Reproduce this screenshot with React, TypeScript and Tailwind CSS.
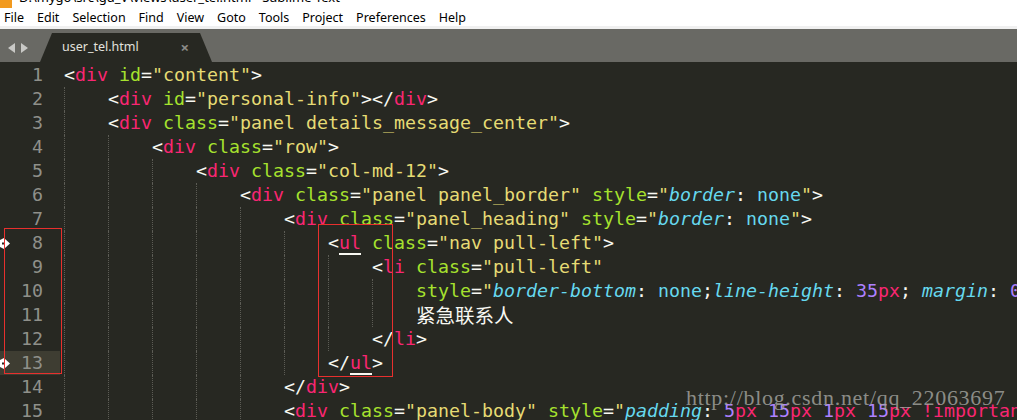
import React from "react";

type Tok = [string, string, boolean?];

const W = "text-[#f8f8f2]";
const P = "text-[#f92672]";
const G = "text-[#a6e22e]";
const Y = "text-[#e6db74]";
const B = "text-[#66d9ef]";
const BI = "text-[#66d9ef] italic";
const N = "text-[#ae81ff]";
const CJK = "text-[#f8f8f2] text-[19.5px] [font-family:'Noto_Sans_CJK_SC',sans-serif]";

const lines: { indent: number; toks: Tok[] }[] = [
  { indent: 0, toks: [["<", W], ["div", P], [" id", G], ["=", W], ['"content"', Y], [">", W]] },
  {
    indent: 1,
    toks: [["<", W], ["div", P], [" id", G], ["=", W], ['"personal-info"', Y], [">", W], ["</", W], ["div", P], [">", W]],
  },
  {
    indent: 1,
    toks: [["<", W], ["div", P], [" class", G], ["=", W], ['"panel details_message_center"', Y], [">", W]],
  },
  { indent: 2, toks: [["<", W], ["div", P], [" class", G], ["=", W], ['"row"', Y], [">", W]] },
  { indent: 3, toks: [["<", W], ["div", P], [" class", G], ["=", W], ['"col-md-12"', Y], [">", W]] },
  {
    indent: 4,
    toks: [
      ["<", W], ["div", P], [" class", G], ["=", W], ['"panel panel_border"', Y], [" style", G], ["=", W],
      ['"', Y], ["border", BI], [":", W], [" none", B], ['"', Y], [">", W],
    ],
  },
  {
    indent: 5,
    toks: [
      ["<", W], ["div", P], [" class", G], ["=", W], ['"panel_heading"', Y], [" style", G], ["=", W],
      ['"', Y], ["border", BI], [":", W], [" none", B], ['"', Y], [">", W],
    ],
  },
  { indent: 6, toks: [["<", W], ["ul", P, true], [" class", G], ["=", W], ['"nav pull-left"', Y], [">", W]] },
  { indent: 7, toks: [["<", W], ["li", P], [" class", G], ["=", W], ['"pull-left"', Y]] },
  {
    indent: 8,
    toks: [
      ["style", G], ["=", W], ['"', Y], ["border-bottom", BI], [":", W], [" none", B], [";", W],
      ["line-height", BI], [": ", W], ["35", N], ["px", P], ["; ", W], ["margin", BI], [": ", W], ["0", N], ["px", P],
    ],
  },
  { indent: 8, toks: [["紧急联系人", CJK]] },
  { indent: 7, toks: [["</", W], ["li", P], [">", W]] },
  { indent: 6, toks: [["</", W], ["ul", P, true], [">", W]] },
  { indent: 5, toks: [["</", W], ["div", P], [">", W]] },
  {
    indent: 5,
    toks: [
      ["<", W], ["div", P], [" class", G], ["=", W], ['"panel-body"', Y], [" style", G], ["=", W], ['"', Y],
      ["padding", BI], [": ", W], ["5", N], ["px", P], [" ", W], ["15", N], ["px", P], [" ", W], ["1", N],
      ["px", P], [" ", W], ["15", N], ["px", P], [" ", W], ["!important", P], ['"', Y],
    ],
  },
];

const menu = ["File", "Edit", "Selection", "Find", "View", "Goto", "Tools", "Project", "Preferences", "Help"];

const Marker = () => (
  <svg width="10" height="11" viewBox="0 0 10 11">
    <path d="M0 2 L4 0 L10 5.5 L4 11 L0 9 Z" fill="#ffffff" />
    <rect x="2" y="4.5" width="2" height="2" fill="#272822" />
  </svg>
);

const App = () => {
  return (
    <div className="relative w-[1017px] h-[420px] overflow-hidden bg-[#272822] [font-family:'Noto_Sans',sans-serif]">
      {/* title strip, cut off */}
      <div className="flex h-[8px] overflow-hidden bg-white">
        <div className="w-[12px] h-[8px] bg-[#f29a1f]" />
        <div className="ml-[7px] -mt-[11px] text-[13px] leading-[16px] text-black whitespace-nowrap">
          D:\mygo\src\gd_V\views\user_tel.html - Sublime Text
        </div>
      </div>

      {/* menu */}
      <div className="flex h-[18px] items-center bg-white pl-[4px] pt-[3px] gap-[13px] text-[12.5px] text-black">
        {menu.map((m) => (
          <span key={m}>{m}</span>
        ))}
      </div>
      <div className="h-[3px] bg-[#f0f0f0]" />

      {/* tab bar */}
      <div className="flex h-[33px] bg-[#696964] pt-[4px]">
        <div className="flex items-center gap-[6px] pl-[8px] w-[40px]">
          <svg width="7" height="10" viewBox="0 0 7 10">
            <path d="M7 0 L0 5 L7 10 Z" fill="#c9c9c6" />
          </svg>
          <svg width="7" height="10" viewBox="0 0 7 10">
            <path d="M0 0 L7 5 L0 10 Z" fill="#c9c9c6" />
          </svg>
        </div>
        <div className="flex items-center w-[172px] h-[29px] bg-[#272822] [clip-path:polygon(12px_0,160px_0,172px_100%,0_100%)]">
          <span className="ml-[22px] text-[12.5px] text-[#e2e2de]">user_tel.html</span>
          <span className="ml-auto mr-[23px] text-[15px] font-bold text-[#8c8c88]">×</span>
        </div>
      </div>

      {/* editor */}
      <div className="pt-[1px] [font-family:'DejaVu_Sans_Mono','Noto_Sans_CJK_SC',monospace] text-[18.27px] leading-[24px]">
        {lines.map((ln, i) => (
          <div key={i} className="flex h-[24px]">
            <div className={`flex w-[60px] shrink-0 items-center ${i === 12 ? "bg-[#3e3d32]" : ""}`}>
              <div className="w-[10px]">{(i === 7 || i === 12) && <Marker />}</div>
              <div className="flex-1 pr-[17px] text-right text-[#8f908a]">{i + 1}</div>
            </div>
            <div className="flex pl-[4px] whitespace-pre">
              {Array.from({ length: ln.indent }).map((_, k) => (
                <div key={k} className="w-[44px] h-[24px] shrink-0 border-l border-dotted border-[#5c5c55]" />
              ))}
              <div className="whitespace-pre">
                {ln.toks.map(([t, c, u], j) => (
                  <span
                    key={j}
                    className={u ? `${c} inline-block h-[24px] shadow-[inset_0_-2px_0_#f8f8f2]` : c}
                  >
                    {t}
                  </span>
                ))}
              </div>
            </div>
          </div>
        ))}
      </div>

      {/* annotations */}
      <div className="absolute left-[4px] top-[228px] w-[58px] h-[146px] border border-[#e8302e]" />
      <div className="absolute left-[318px] top-[224px] w-[75px] h-[153px] border border-[#e8302e]" />

      {/* watermark */}
      <div className="absolute left-[686px] top-[387px] text-[22px] leading-none tracking-[0.7px] text-[#a8a8a4]/80 [font-family:'Liberation_Serif',serif]">
        http://blog.csdn.net/qq_22063697
      </div>
    </div>
  );
};

export default App;
